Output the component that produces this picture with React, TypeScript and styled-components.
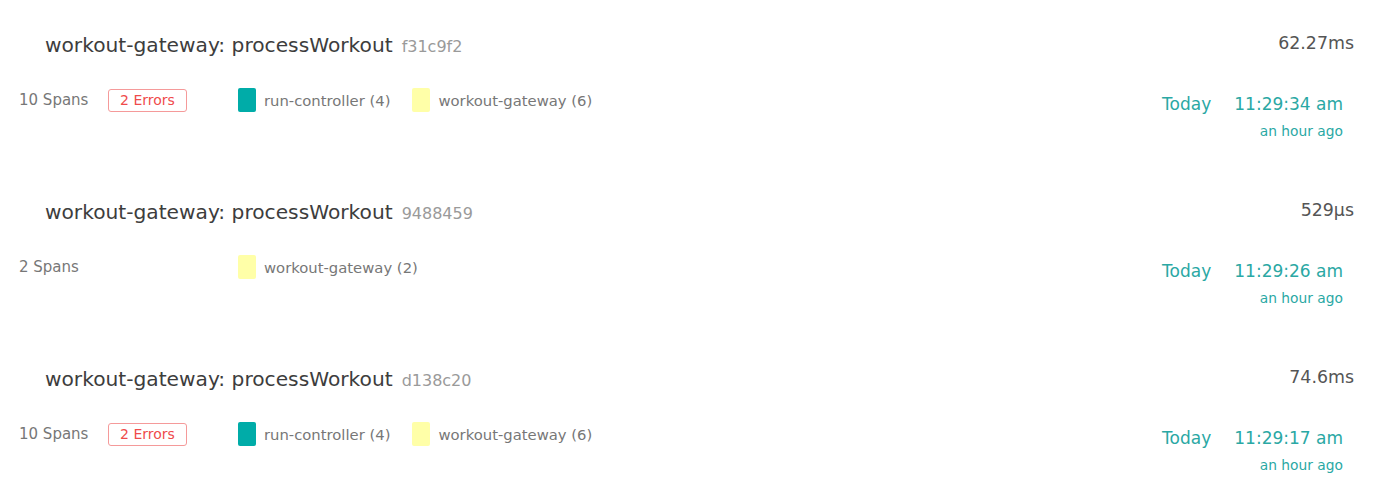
import styled, { createGlobalStyle } from 'styled-components'

const GlobalStyle = createGlobalStyle`
  body {
    margin: 0;
    background: #fff;
    font-family: "DejaVu Sans", Verdana, sans-serif;
  }
`

const List = styled.main`
  display: flex;
  flex-direction: column;
`

const Trace = styled.section`
  height: 167px;
  box-sizing: border-box;
  padding-top: 33px;
`

const Header = styled.div`
  display: flex;
  justify-content: space-between;
  align-items: flex-start;
  padding: 0 21px 0 45px;
`

const Title = styled.h3`
  margin: 0;
  font-size: 20.2px;
  line-height: 24px;
  font-weight: normal;
  color: #3d3d3d;
`

const TraceId = styled.span`
  margin-left: 9px;
  font-size: 16px;
  color: #9a9a9a;
`

const Duration = styled.span`
  font-size: 17.4px;
  line-height: 20px;
  color: #555;
`

const Body = styled.div`
  display: flex;
  justify-content: space-between;
  align-items: flex-start;
  padding: 0 32px 0 19px;
  margin-top: 29px;
`

const Meta = styled.div`
  display: flex;
  align-items: center;
  height: 24px;
`

const Spans = styled.span`
  width: 89px;
  font-size: 15px;
  color: #777;
`

const Errors = styled.span`
  box-sizing: border-box;
  width: 79px;
  height: 23px;
  margin-right: 51px;
  border: 1px solid #f59a9a;
  border-radius: 3px;
  color: #ef4b4b;
  font-size: 14px;
  line-height: 21px;
  text-align: center;
`

const Spacer = styled.span`
  width: 130px;
`

const Service = styled.span`
  display: flex;
  align-items: center;
  margin-right: 22px;
  font-size: 14.8px;
  color: #777;
`

const Swatch = styled.span<{ $color: string }>`
  width: 18px;
  height: 24px;
  margin-right: 8px;
  border-radius: 2px;
  background: ${({ $color }) => $color};
`

const When = styled.div`
  display: flex;
  flex-direction: column;
  align-items: flex-end;
  margin-top: 6px;
  color: #2aa8a4;
`

const Stamp = styled.div`
  display: flex;
  gap: 23px;
  font-size: 17px;
  line-height: 20px;
`

const Ago = styled.div`
  margin-top: 9px;
  font-size: 13.8px;
  line-height: 16px;
`

const colors: Record<string, string> = {
  'run-controller': '#00aca8',
  'workout-gateway': '#ffffa8',
}

type TraceData = {
  id: string
  duration: string
  spans: number
  errors: number
  services: [string, number][]
  time: string
}

const traces: TraceData[] = [
  { id: 'f31c9f2', duration: '62.27ms', spans: 10, errors: 2, services: [['run-controller', 4], ['workout-gateway', 6]], time: '11:29:34 am' },
  { id: '9488459', duration: '529μs', spans: 2, errors: 0, services: [['workout-gateway', 2]], time: '11:29:26 am' },
  { id: 'd138c20', duration: '74.6ms', spans: 10, errors: 2, services: [['run-controller', 4], ['workout-gateway', 6]], time: '11:29:17 am' },
]

export default function App () {
  return (
    <>
      <GlobalStyle />
      <List>
        {traces.map(t => (
          <Trace key={t.id}>
            <Header>
              <Title>
                workout-gateway: processWorkout
                <TraceId>{t.id}</TraceId>
              </Title>
              <Duration>{t.duration}</Duration>
            </Header>
            <Body>
              <Meta>
                <Spans>{t.spans} Spans</Spans>
                {t.errors > 0 ? <Errors>{t.errors} Errors</Errors> : <Spacer />}
                {t.services.map(([name, count]) => (
                  <Service key={name}>
                    <Swatch $color={colors[name]} />
                    {name} ({count})
                  </Service>
                ))}
              </Meta>
              <When>
                <Stamp>
                  <span>Today</span>
                  <span>{t.time}</span>
                </Stamp>
                <Ago>an hour ago</Ago>
              </When>
            </Body>
          </Trace>
        ))}
      </List>
    </>
  )
}
